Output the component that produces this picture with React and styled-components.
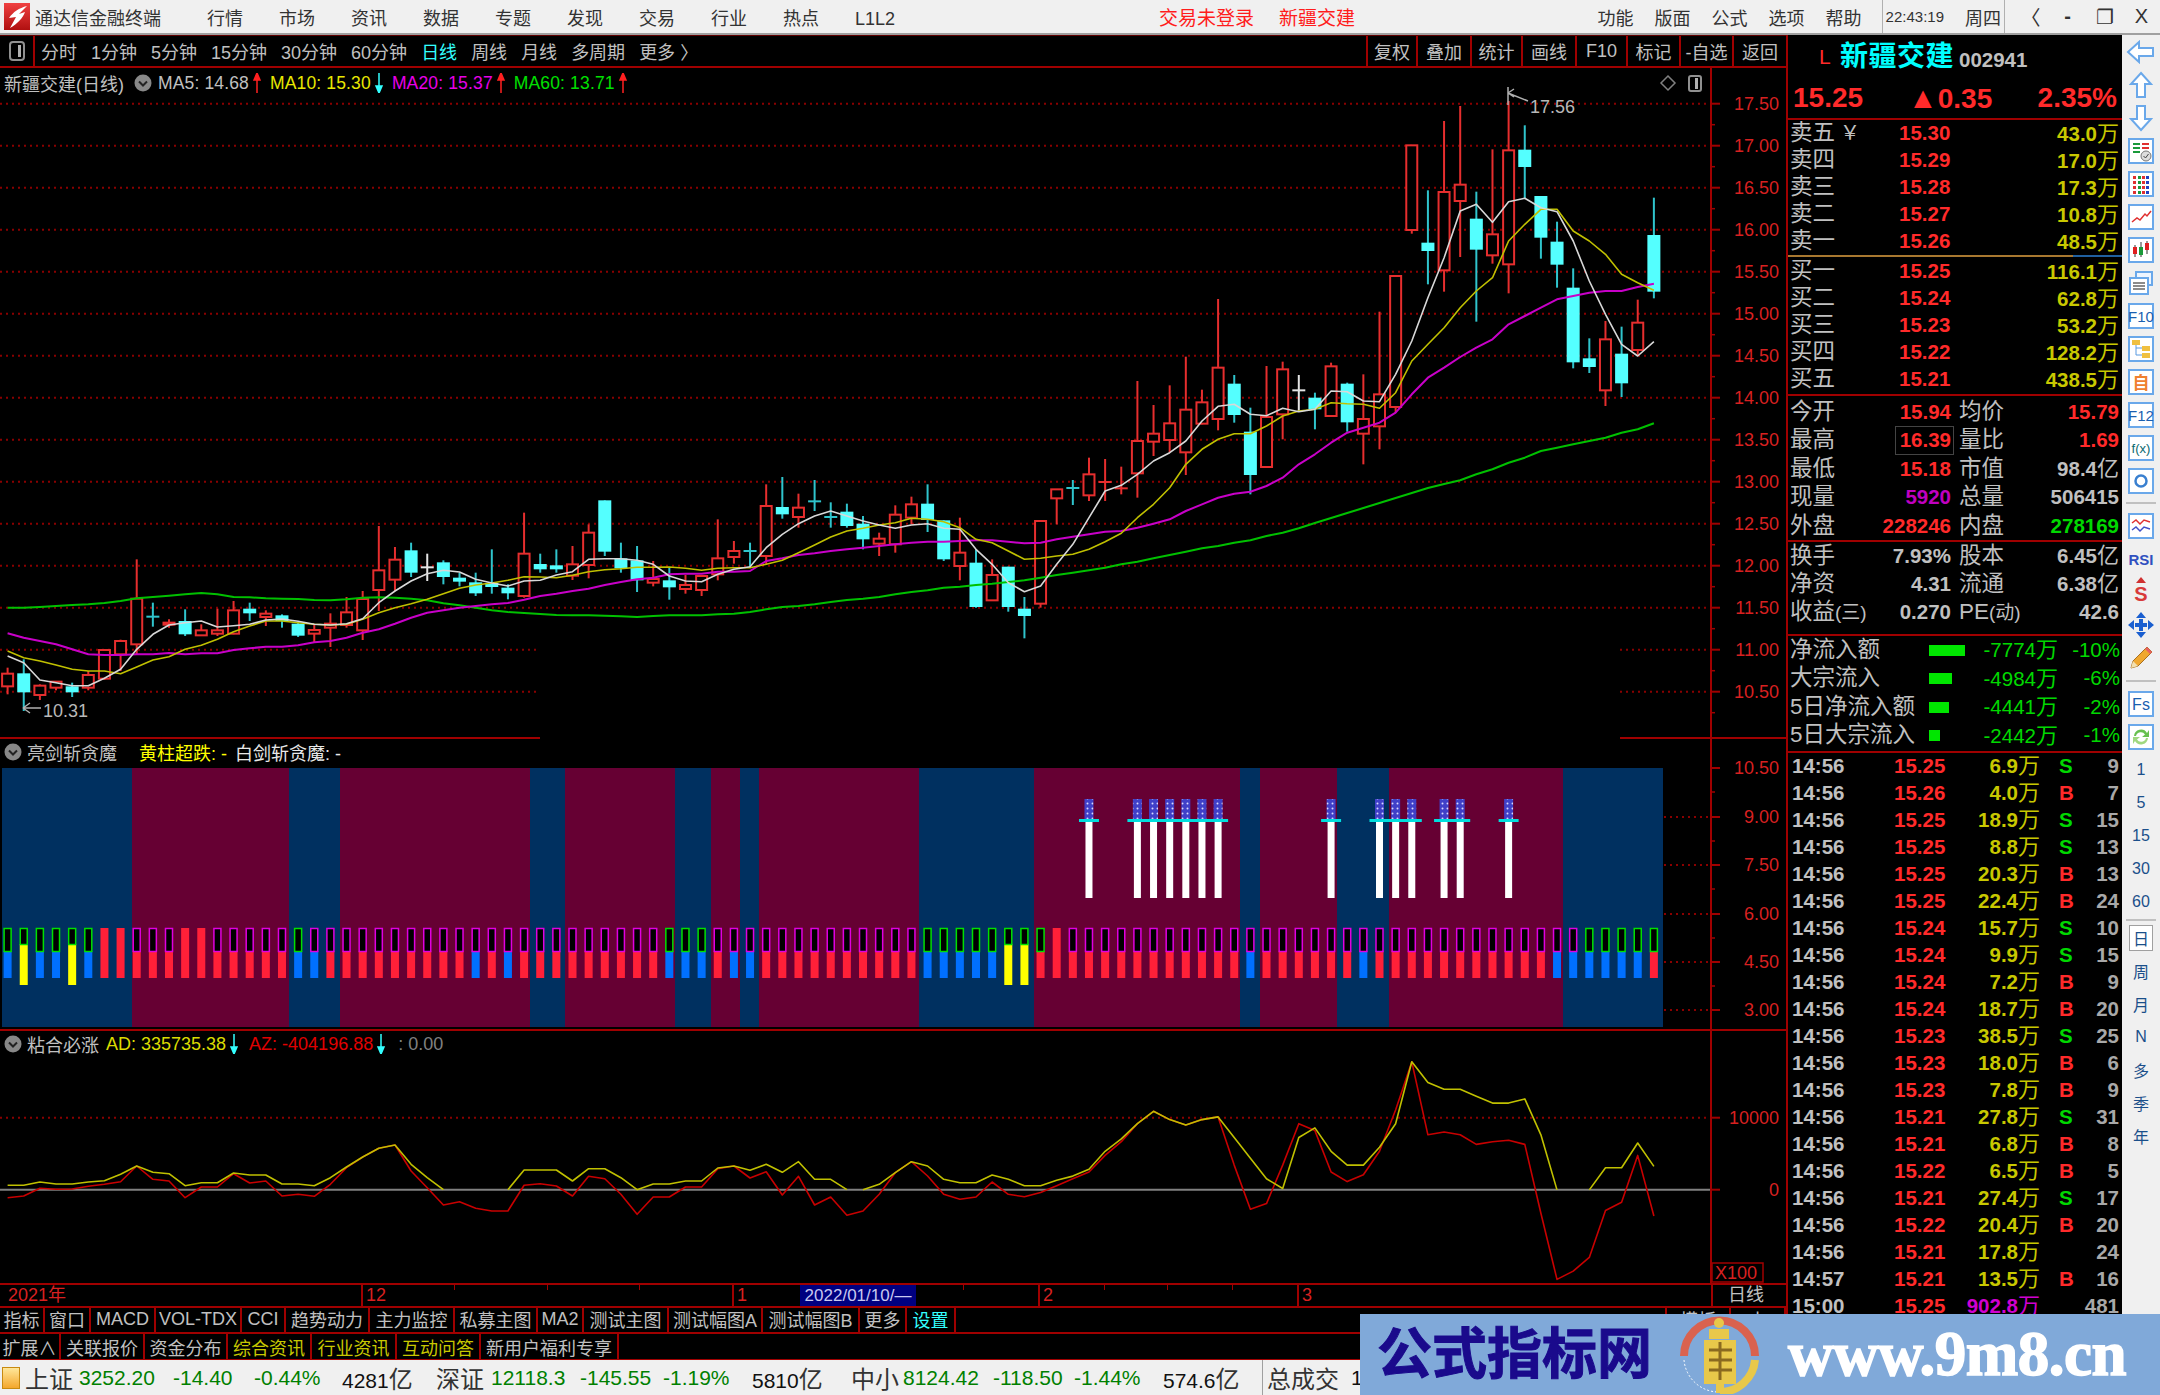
import React from 'react';
import styled, { createGlobalStyle } from 'styled-components';

const FONT = `"Liberation Sans", "Noto Sans CJK SC", sans-serif`;
const RED = '#ff2a2a';
const LINE = '#a00000';
const GOLD = '#c8c800';

const GlobalStyle = createGlobalStyle`
  html, body { margin: 0; padding: 0; background: #000; }
  body { width: 2160px; height: 1395px; overflow: hidden; font-family: ${FONT}; }
`;

/* ---------- chart data ---------- */
// candle y values were read off 3x crops, so y = base + v / 3
const readRows = (base, rows) =>
  rows.map(([k, a, b, c, d]) => [k, base + a / 3, base + b / 3, base + c / 3, base + d / 3]);

const candles = [
  ...readRows(480, [
    ['r', 560, 578, 616, 640], ['c', 535, 577, 634, 690], ['r', 610, 614, 642, 657], ['r', 600, 602, 620, 628],
    ['c', 605, 616, 634, 648], ['r', 570, 582, 620, 628], ['r', 507, 507, 593, 597], ['r', 476, 480, 520, 570],
    ['r', 235, 353, 490, 520], ['c', 365, 407, 407, 437], ['r', 415, 425, 431, 440], ['c', 385, 420, 460, 465],
    ['r', 430, 448, 463, 465], ['r', 383, 448, 458, 465], ['r', 360, 388, 458, 460], ['c', 365, 383, 397, 420],
    ['r', 388, 398, 408, 435], ['c', 400, 403, 420, 440], ['c', 425, 428, 464, 468], ['r', 432, 447, 458, 485],
    ['r', 397, 428, 440, 498], ['r', 348, 394, 432, 440], ['r', 330, 354, 448, 477], ['r', 135, 268, 327, 390],
    ['r', 198, 236, 296, 330], ['c', 185, 208, 275, 288], ['w', 218, 259, 259, 300], ['c', 238, 244, 288, 310],
    ['c', 276, 290, 302, 316], ['c', 275, 304, 337, 345], ['c', 205, 306, 318, 338], ['c', 310, 320, 337, 355],
    ['r', 95, 218, 345, 350], ['c', 218, 249, 265, 275], ['c', 205, 253, 265, 275], ['r', 195, 250, 284, 297],
    ['r', 130, 155, 252, 292], ['c', 58, 58, 212, 225], ['c', 185, 232, 262, 275], ['c', 195, 238, 298, 333],
    ['r', 240, 294, 305, 316], ['c', 258, 298, 319, 356], ['r', 282, 312, 324, 338], ['r', 282, 285, 327, 345],
  ]),
  ...readRows(300, [
    ['r', 655, 772, 820, 838], ['r', 720, 750, 768, 788], ['c', 725, 750, 750, 800], ['r', 550, 615, 765, 790],
    ['c', 528, 618, 640, 653], ['r', 578, 620, 648, 680], ['c', 537, 601, 601, 630], ['c', 604, 648, 648, 680],
    ['c', 608, 632, 675, 680], ['c', 645, 668, 715, 745], ['r', 695, 713, 728, 765], ['r', 613, 641, 730, 755],
    ['r', 587, 610, 650, 670], ['c', 550, 608, 657, 693], ['c', 658, 658, 775, 780], ['r', 650, 755, 795, 838],
    ['c', 745, 785, 918, 920], ['r', 775, 822, 898, 900], ['c', 797, 797, 918, 932], ['c', 888, 923, 945, 1012],
    ['r', 660, 660, 908, 920], ['r', 565, 565, 592, 670], ['c', 537, 561, 561, 612], ['r', 470, 520, 583, 600],
    ['r', 474, 543, 543, 600], ['r', 497, 562, 562, 580], ['r', 240, 420, 517, 590], ['r', 312, 398, 422, 465],
    ['r', 253, 367, 417, 455], ['r', 167, 326, 454, 522], ['r', 266, 304, 368, 370], ['r', -6, 200, 354, 388],
    ['c', 222, 248, 342, 365], ['c', 320, 392, 522, 580], ['r', 195, 348, 498, 500], ['r', 182, 205, 340, 415],
    ['w', 222, 268, 268, 330],
  ]),
  ...readRows(80, [
    ['c', 935, 950, 985, 1045], ['r', 845, 856, 1005, 1005], ['c', 905, 908, 1024, 1052], ['r', 880, 1014, 1058, 1150],
    ['r', 692, 940, 1036, 1105], ['r', 585, 585, 978, 995], ['r', 193, 193, 447, 458], ['c', 328, 485, 510, 610],
    ['r', 120, 333, 568, 632], ['r', 75, 311, 360, 528], ['c', 332, 413, 506, 722], ['r', 205, 460, 523, 548],
    ['r', 60, 208, 550, 637], ['c', 133, 206, 258, 352], ['c', 345, 345, 470, 533], ['c', 422, 482, 551, 620],
    ['c', 562, 620, 844, 862], ['c', 772, 832, 858, 876], ['r', 720, 775, 928, 975], ['c', 737, 818, 907, 948],
    ['r', 656, 725, 807, 825], ['c', 350, 462, 632, 652],
  ]),
];

const merge = (a, b, c) => [...a.map(v => 480 + v / 3), ...b.map(v => 300 + v / 3), ...c.map(v => 80 + v / 3)];

const ma5 = merge(
  [525,545,597,605,614,614,592,565,505,460,432,425,420,438,434,430,417,414,421,430,432,428,413,365,330,300,278,268,273,295,306,315,300,298,282,272,235,233,233,238,250,285,300,302],
  [820,805,797,740,700,668,645,630,645,660,672,682,672,668,682,685,745,790,845,872,855,790,730,650,570,553,520,480,455,420,360,316,310,340,344,322,332],
  [985,930,932,960,962,880,780,650,530,390,370,424,362,352,380,392,480,600,700,790,825,782],
);
const ma10 = merge(
  [510,530,540,552,565,570,570,578,558,537,527,505,493,475,452,435,420,420,425,430,432,430,415,395,380,368,355,338,322,312,306,298,287,288,290,283,272,266,263,259,259,258,262,268],
  [802,800,800,790,778,755,732,708,690,682,672,665,652,655,662,680,715,725,750,775,772,765,760,745,722,697,650,610,560,490,445,415,398,398,375,345,330],
  [985,965,968,970,982,935,840,790,740,680,630,590,480,430,385,385,450,480,520,580,605,628],
);
const ma20 = merge(
  [457,470,480,490,505,520,522,522,520,520,516,520,517,517,507,502,497,497,493,484,480,470,455,445,428,410,395,388,380,375,370,366,356,345,338,330,323,312,303,295,290,280,278,278],
  [812,812,810,780,772,762,757,750,745,740,735,730,725,722,722,720,718,718,722,727,725,715,707,700,692,690,680,668,655,630,610,590,578,572,555,530,490],
  [1120,1085,1055,1040,1025,995,940,890,860,828,800,775,730,705,680,655,645,635,630,630,618,608],
);
const ma60 = merge(
  [380,380,378,375,372,370,366,360,352,348,344,340,336,340,348,349,352,353,354,357,358,355,350,349,350,353,358,367,373,380,388,393,396,399,402,403,403,404,406,408,405,403,403,403],
  [940,938,933,925,918,915,910,903,897,893,888,880,873,868,860,857,852,848,843,838,830,822,815,808,800,790,782,772,762,752,742,735,725,718,705,695,682],
  [1326,1311,1296,1281,1266,1251,1236,1221,1209,1198,1180,1165,1145,1130,1110,1100,1090,1080,1070,1055,1045,1027],
);

const sub2 = (head, tail) => [...head.map(v => 1030 + v / 3), ...tail.map(v => v * 1.3776)];
const adLine = sub2(
  [463,463,453,459,459,453,449,430,405,424,428,464,455,455,426,432,432,459,459,464,440,408,378,352,342,400,440,476,476,476,476,476,417,417,417,450,413,413,440,476,459,459,450,450,411,405,418,400,424,392,445,445,476,476,460,425,392,405,445,455,455,432,445],
  [860,860,856,853,848,835,826,815,806,812,816,812,810,825,840,855,862,825,818,835,845,845,832,815,770,785,790,790,795,800,800,797,823,863,863,863,847,847,829,846],
);
const azLine = sub2(
  [500,495,472,475,474,466,460,452,405,445,450,500,468,468,428,456,450,495,490,496,460,410,378,352,342,420,470,522,512,532,540,540,463,458,465,495,436,443,490,550,498,498,468,468,413,405,441,422,492,436,522,498,553,540,490,425,392,435,490,505,498,453,490],
  [868,865,860,855,850,838,828,815,806,812,816,812,810,845,877,873,845,815,820,850,857,852,835,805,770,823,821,823,830,828,827,830,880,928,922,912,878,872,838,882],
);

const barX = i => 7.6 + 16.14 * i;
const toPoints = (ys, from = 0, to = ys.length - 1) =>
  ys.slice(from, to + 1).map((y, i) => `${barX(i + from).toFixed(1)},${y.toFixed(1)}`).join(' ');

const bgBands = [
  [2, 132, 'b'], [132, 289, 'm'], [289, 340, 'b'], [340, 530, 'm'], [530, 565, 'b'], [565, 675, 'm'],
  [675, 711, 'b'], [711, 740, 'm'], [740, 759, 'b'], [759, 919, 'm'], [919, 1034, 'b'], [1034, 1240, 'm'],
  [1240, 1260, 'b'], [1260, 1337, 'm'], [1337, 1389, 'b'], [1389, 1563, 'm'], [1563, 1663, 'b'],
];
const barOverrides = {
  0: 'gb', 1: 'gy', 2: 'gb', 3: 'gb', 4: 'gy', 5: 'gb', 6: 'f', 7: 'f', 11: 'f', 12: 'f', 18: 'gb', 19: 'mb',
  29: 'mb', 31: 'mb', 41: 'gb', 42: 'gb', 43: 'gb', 45: 'mb', 46: 'mb', 57: 'gb', 58: 'gb', 59: 'gb', 60: 'gb',
  61: 'gb', 62: 'gy', 63: 'gy', 64: 'gr', 65: 'f', 77: 'mb', 84: 'mb', 96: 'mb', 97: 'mb', 98: 'gb', 99: 'gb',
  100: 'gb', 101: 'gb', 102: 'gr',
};
const swordBars = [67, 70, 71, 72, 73, 74, 75, 82, 85, 86, 87, 89, 90, 93];

const mainLabels = ['17.50','17.00','16.50','16.00','15.50','15.00','14.50','14.00','13.50','13.00','12.50','12.00','11.50','11.00','10.50'];
const priceY = i => 102.7 + i * 42;

/* ---------- styled parts ---------- */
const Page = styled.div`
  position: relative;
  width: 2160px;
  height: 1395px;
  display: flex;
  flex-direction: column;
  background: #000;
  overflow: hidden;
`;

const TitleBar = styled.div`
  height: 33px;
  flex: none;
  display: flex;
  align-items: center;
  background: #f0f0f0;
  border-bottom: 2px solid #a0a0a0;
  color: #333;
  font-size: 18px;
  white-space: nowrap;
`;

const AppName = styled.span`
  margin-left: 5px;
  width: 172px;
`;

const MenuGroup = styled.div`
  display: flex;
  align-items: baseline;
  gap: ${p => p.$gap}px;
`;

const AlertText = styled.span`
  color: #ff1c1c;
  font-size: 19px;
  margin-left: ${p => p.$left}px;
`;

const TitleRight = styled.div`
  margin-left: auto;
  display: flex;
  align-items: center;
  height: 100%;
`;

const ClockCell = styled.div`
  display: flex;
  align-items: center;
  height: 100%;
  margin-left: 20px;
  padding: 0 3px;
  border-left: 1px solid #b0b0b0;
  border-right: 1px solid #b0b0b0;
  gap: 21px;
  font-size: 15px;
  span:last-child { font-size: 18px; }
`;

const WindowButton = styled.span`
  width: 37px;
  text-align: center;
  font-size: 20px;
  font-weight: ${p => (p.$bold ? 700 : 400)};
  margin-left: ${p => p.$left || 0}px;
`;

const Body = styled.div`
  flex: none;
  height: 1325px;
  display: flex;
`;

const LeftColumn = styled.div`
  width: 1786px;
  flex: none;
  display: flex;
  flex-direction: column;
`;

const Toolbar = styled.div`
  height: 30px;
  flex: none;
  display: flex;
  align-items: center;
  border-top: 1px solid #600000;
  border-bottom: 2px solid ${LINE};
  color: #c0c0c0;
  font-size: 18px;
  white-space: nowrap;
`;

const ToolSquare = styled.div`
  width: 35px;
  height: 100%;
  flex: none;
  display: flex;
  align-items: center;
  justify-content: center;
  box-sizing: border-box;
  border-right: 2px solid ${LINE};
  margin-right: 6px;
`;

const PeriodList = styled.div`
  display: flex;
  gap: 14px;
`;

const Period = styled.span`
  color: ${p => (p.$active ? '#3ff' : 'inherit')};
`;

const ToolButtons = styled.div`
  margin-left: auto;
  display: flex;
  height: 100%;
`;

const ToolButton = styled.div`
  width: ${p => p.$w}px;
  box-sizing: border-box;
  border-left: 2px solid ${LINE};
  display: flex;
  align-items: center;
  justify-content: center;
`;

const Pane = styled.div`
  position: relative;
  height: ${p => p.$h}px;
  flex: none;
  svg.chart { display: block; }
`;

const Legend = styled.div`
  position: absolute;
  left: 4px;
  top: ${p => p.$top}px;
  height: 24px;
  display: flex;
  align-items: center;
  color: #c0c0c0;
  font-size: 18px;
  white-space: nowrap;
`;

const LegendName = styled.span`
  margin: 0 ${p => p.$right || 0}px 0 ${p => p.$left || 0}px;
`;

const LegendValue = styled.span`
  color: ${p => p.$c};
  font-size: ${p => p.$size || 17.5}px;
  letter-spacing: ${p => p.$spacing || 0}px;
  margin-left: ${p => p.$left || 0}px;
`;

const AxisText = styled.text`
  fill: ${p => p.$c || '#d82020'};
  font-family: ${FONT};
  font-size: 18px;
  text-anchor: ${p => p.$anchor || 'end'};
`;

const TimeAxis = styled.div`
  height: 21px;
  flex: none;
  position: relative;
  display: grid;
  grid-template-columns: 361px 371px 68px 116px 122px 259px 414px 75px;
  border-top: 2px solid ${LINE};
  border-bottom: 2px solid ${LINE};
  margin-bottom: -2px;
  color: #d82020;
  font-size: 18px;
  line-height: 21px;
  white-space: nowrap;
`;

const TimeCell = styled.div`
  box-sizing: border-box;
  padding-left: ${p => (p.$first ? 8 : 3)}px;
  border-left: ${p => (p.$plain ? 'none' : `2px solid ${LINE}`)};
`;

const DateCell = styled.div`
  background: #000080;
  color: #c8c8f0;
  font-size: 17px;
  text-align: center;
`;

const FrameCell = styled.div`
  border-left: 2px solid ${LINE};
  color: #c0c0c0;
  text-align: right;
  padding-right: 22px;
`;

const TimeTick = styled.i`
  position: absolute;
  top: 0;
  width: 1px;
  height: 5px;
  background: ${LINE};
`;

const TabRow = styled.div`
  height: ${p => p.$h}px;
  flex: none;
  display: flex;
  box-sizing: border-box;
  border-bottom: 2px solid ${LINE};
  color: #c0c0c0;
  font-size: 18px;
  white-space: nowrap;
`;

const Tab = styled.div`
  width: ${p => p.$w}px;
  box-sizing: border-box;
  display: flex;
  align-items: center;
  justify-content: center;
  border-right: 2px solid ${LINE};
  border-left: ${p => (p.$edge ? `2px solid ${LINE}` : 'none')};
  color: ${p => p.$c || 'inherit'};
  overflow: hidden;
`;

const TabSpacer = styled.div`
  flex: 1;
`;

/* right quote panel */
const Panel = styled.div`
  width: 336px;
  flex: none;
  box-sizing: border-box;
  border-left: 2px solid ${LINE};
  overflow: hidden;
  color: #c0c0c0;
`;

const NameRow = styled.div`
  height: 44px;
  display: flex;
  align-items: center;
  white-space: nowrap;
`;

const MarketTag = styled.span`
  margin-left: 31px;
  width: 21px;
  color: ${RED};
  font-size: 21px;
`;

const StockName = styled.span`
  color: #0ff;
  font-size: 28px;
  font-weight: 700;
  line-height: 32px;
  letter-spacing: 0.5px;
`;

const StockCode = styled.span`
  margin-left: 5px;
  font-size: 20.5px;
  font-weight: 700;
  padding-top: 6px;
  color: #c0c0c0;
`;

const QuoteRow = styled.div`
  height: 37px;
  display: grid;
  grid-template-columns: 119px 96px 1fr;
  align-items: center;
  padding: 0 5px 2px 5px;
  border-bottom: 2px solid ${LINE};
  color: ${RED};
  font-size: 28px;
  font-weight: 700;
`;

const QuoteTriangle = styled.span`
  font-size: 30px;
  margin-left: -4px;
`;

const QuoteRight = styled.span`
  text-align: right;
`;

const OrderBlock = styled.div`
  padding-top: ${p => p.$top || 0}px;
`;

const OrderRow = styled.div`
  height: 27px;
  display: grid;
  grid-template-columns: 109px 60px 1fr;
  align-items: center;
  padding: 0 3px 0 2px;
  white-space: nowrap;
`;

const ZhLabel = styled.span`
  font-size: 22.5px;
  line-height: 1;
  color: #c0c0c0;
  small { font-size: 19px; }
`;

const Num = styled.span`
  color: ${p => p.$c || RED};
  font-size: 20.5px;
  font-weight: 700;
  line-height: 1;
  text-align: ${p => p.$align || 'left'};
`;

const Unit = styled.span`
  font-size: 22px;
  font-weight: 400;
  line-height: 1;
`;

const CnyMark = styled.span`
  font-size: 20px;
  margin-left: 5px;
`;

const BookDivider = styled.div`
  height: 2px;
  background: linear-gradient(to right, #a87830 0, #a87830 285px, #2060a0 285px);
`;

const StatBlock = styled.div`
  padding-bottom: ${p => p.$bottom || 0}px;
  padding-top: ${p => p.$top || 0}px;
  border-bottom: 2px solid ${LINE};
`;

const StatRow = styled.div`
  height: ${p => p.$h || 28.4}px;
  display: grid;
  grid-template-columns: 50px 111px 60px 108px;
  align-items: center;
  padding-left: 2px;
  white-space: nowrap;
`;

const Value = styled(Num)`
  text-align: right;
  justify-self: end;
`;

const Value2Label = styled(ZhLabel)`
  padding-left: 8px;
`;

const BoxedValue = styled(Value)`
  border: 1px solid #444;
  padding: 3px 2px 3px 4px;
  margin-right: -3px;
`;

const FlowRow = styled.div`
  height: 28.5px;
  display: grid;
  grid-template-columns: 139px 45px 84px 62px;
  align-items: center;
  padding-left: 2px;
  white-space: nowrap;
`;

const FlowBar = styled.i`
  display: block;
  height: 11px;
  width: ${p => p.$w}px;
  background: #00e600;
`;

const FlowValue = styled.span`
  color: #00d800;
  font-size: 20.5px;
  line-height: 1;
  text-align: right;
`;

const TickRow = styled.div`
  height: 27px;
  display: grid;
  grid-template-columns: 102px 52px 94px 30px 49px;
  align-items: center;
  padding-left: 4px;
  white-space: nowrap;
`;

const TickSide = styled.span`
  color: ${p => (p.$v === 'S' ? '#00d800' : RED)};
  font-size: 20.5px;
  font-weight: 700;
  line-height: 1;
  padding-left: 19px;
`;

/* icon rail */
const Rail = styled.div`
  width: 38px;
  flex: none;
  display: flex;
  flex-direction: column;
  align-items: center;
  background: #f0f0f0;
  color: #1a4f8a;
`;

const RailItem = styled.div`
  height: 33px;
  flex: none;
  width: 100%;
  display: flex;
  align-items: center;
  justify-content: center;
  font-size: 16px;
`;

const RailSeparator = styled.div`
  height: ${p => p.$h}px;
  flex: none;
  width: 30px;
  display: flex;
  align-items: center;
  &::after { content: ''; display: block; width: 100%; border-top: 2px solid #c0c0c0; }
`;

const ActivePeriod = styled.span`
  width: 22px;
  height: 24px;
  border: 1px solid #a0a0a0;
  background: #fff;
  display: flex;
  align-items: center;
  justify-content: center;
`;

/* bottom status bar */
const StatusBar = styled.div`
  height: 35px;
  flex: none;
  display: flex;
  align-items: center;
  background: #f0f0f0;
  padding-left: 2px;
  box-sizing: border-box;
  white-space: nowrap;
`;

const StatusIcon = styled.i`
  display: block;
  width: 16px;
  height: 20px;
  margin-right: 5px;
  flex: none;
  border: 1px solid #c88a10;
  background: linear-gradient(#ffe79a, #f4a72c);
`;

const StatusCell = styled.span`
  width: ${p => p.$w}px;
  flex: none;
  color: ${p => p.$c || '#111'};
  font-size: ${p => p.$size || 21}px;
  small { font-size: 24px; color: #333; }
`;

const StatusDivider = styled.span`
  width: 4px;
  height: 100%;
  flex: none;
  border-left: 1px solid #a0a0a0;
`;

const Watermark = styled.div`
  position: absolute;
  right: 0;
  bottom: 0;
  width: 800px;
  height: 81px;
  display: flex;
  align-items: center;
  background: #80a9d9;
  white-space: nowrap;
`;

const MarkTitle = styled.span`
  margin-left: 17px;
  color: #1a0a8c;
  font-size: 55px;
  font-weight: 700;
  line-height: 1;
  -webkit-text-stroke: 1px #1a0a8c;
`;

const MarkLogo = styled.svg`
  margin-left: 28px;
  flex: none;
`;

const MarkUrl = styled.span`
  margin-left: 29px;
  color: #fff;
  font-family: "Liberation Serif", serif;
  font-size: 63px;
  font-weight: 700;
  letter-spacing: -0.5px;
  line-height: 1;
  -webkit-text-stroke: 1.5px #fff;
`;

/* ---------- drawings ---------- */
const Chevron = () => (
  <svg width="18" height="18" viewBox="0 0 18 18" style={{ flex: 'none' }}>
    <circle cx="9" cy="9" r="8.5" fill="#888" />
    <path d="M5 7.5 L9 11.5 L13 7.5" fill="none" stroke="#222" strokeWidth="2" />
  </svg>
);

const TrendArrow = ({ up }) => (
  <svg width="10" height="20" viewBox="0 0 10 20" style={{ flex: 'none', margin: '0 0 0 3px' }}>
    {up
      ? <path d="M5 20 V2 M5 0 L8 7 H2 Z" stroke="#ff2020" fill="#ff2020" strokeWidth="1.5" />
      : <path d="M5 0 V18 M5 20 L8 13 H2 Z" stroke="#3ff" fill="#3ff" strokeWidth="1.5" />}
  </svg>
);

const PinSquare = () => (
  <svg width="16" height="20" viewBox="0 0 16 20">
    <rect x="1" y="1" width="14" height="18" rx="3" fill="none" stroke="#909090" strokeWidth="2" />
    <rect x="9" y="4" width="3" height="12" fill="#b0b0b0" />
  </svg>
);

const Candle = ({ i, data }) => {
  const [kind, hi, top, bot, lo] = data;
  const x = barX(i);
  const doji = top === bot;
  const red = '#e62e2e';
  const color = kind === 'r' ? red : kind === 'w' ? '#e4e4e4' : '#2fc4cc';
  if (doji) {
    return (
      <g stroke={color} strokeWidth="2">
        <line x1={x} x2={x} y1={hi} y2={lo} />
        <line x1={x - 6.5} x2={x + 6.5} y1={top} y2={top} />
      </g>
    );
  }
  if (kind === 'r') {
    return (
      <g>
        <line x1={x} x2={x} y1={hi} y2={top} stroke={color} strokeWidth="2" />
        <line x1={x} x2={x} y1={bot} y2={lo} stroke={color} strokeWidth="2" />
        <rect x={x - 5.5} y={top} width="11" height={bot - top} fill="#000" stroke={red} strokeWidth="2" />
      </g>
    );
  }
  return (
    <g>
      <line x1={x} x2={x} y1={hi} y2={lo} stroke={color} strokeWidth="2" />
      <rect x={x - 6.5} y={top} width="13" height={bot - top} fill="#54ffff" />
    </g>
  );
};

const DottedRow = ({ y, x1 = 0, x2 = 1711 }) => (
  <line x1={x1} x2={x2} y1={y} y2={y} stroke="#8a0000" strokeWidth="2" strokeDasharray="2 4" />
);

const MaLine = ({ ys, color, from, to, width = 1.6 }) => (
  <polyline points={toPoints(ys, from, to)} fill="none" stroke={color} strokeWidth={width} strokeLinejoin="round" />
);

const MainChart = () => (
  <svg className="chart" width="1786" height="671" viewBox="0 67 1786 671">
    {mainLabels.map((t, i) => {
      const y = priceY(i);
      if (y > 630) return (
        <g key={t}>
          <DottedRow y={y} x2={540} />
          <DottedRow y={y} x1={1620} />
        </g>
      );
      return <DottedRow key={t} y={y} />;
    })}
    {candles.map((c, i) => <Candle key={i} i={i} data={c} />)}
    <MaLine ys={ma60} color="#00c000" width={2} />
    <MaLine ys={ma20} color="#c800c8" width={2} />
    <MaLine ys={ma10} color="#c0c000" />
    <MaLine ys={ma5} color="#d8d8d8" />
    <path d="M1508 86 V104 M1508 92 L1528 100 M1508 92 L1514 88 M1508 92 L1514 96" stroke="#b0b0b0" strokeWidth="1.5" fill="none" />
    <AxisText $c="#b8b8b8" $anchor="start" x="1530" y="112">17.56</AxisText>
    <path d="M23 707 H41 M23 707 L30 702 M23 707 L30 712" stroke="#b0b0b0" strokeWidth="1.5" fill="none" />
    <AxisText $c="#b8b8b8" $anchor="start" x="43" y="716">10.31</AxisText>
    <line x1="1711" x2="1711" y1="67" y2="738" stroke={LINE} strokeWidth="2" />
    {mainLabels.map((t, i) => (
      <g key={t}>
        <line x1="1711" x2="1720" y1={priceY(i)} y2={priceY(i)} stroke={LINE} strokeWidth="2" />
        <line x1="1711" x2="1715" y1={priceY(i) + 21} y2={priceY(i) + 21} stroke={LINE} strokeWidth="1.5" />
        <AxisText x="1779" y={priceY(i) + 6}>{t}</AxisText>
      </g>
    ))}
    <path d="M1668 75 L1675 82 L1668 89 L1661 82 Z" fill="none" stroke="#808080" strokeWidth="1.5" />
    <rect x="1689" y="75" width="12" height="15" rx="2" fill="none" stroke="#909090" strokeWidth="2" />
    <rect x="1695" y="77" width="3" height="11" fill="#b0b0b0" />
    <line x1="0" x2="540" y1="737" y2="737" stroke={LINE} strokeWidth="2" />
    <line x1="1620" x2="1786" y1="737" y2="737" stroke={LINE} strokeWidth="2" />
  </svg>
);

const SwordBar = ({ i }) => {
  const x = barX(i);
  return (
    <g>
      <rect x={x - 4.5} y="798" width="9" height="20" fill="url(#swordGrip)" />
      <rect x={x - 10} y="818" width="20" height="3" fill="#00dede" />
      <rect x={x - 3.5} y="821" width="7" height="76" fill="#fff" />
    </g>
  );
};

const VolumeBar = ({ i }) => {
  const x = barX(i) - 4;
  const kind = barOverrides[i] || 'mr';
  if (kind === 'f') return <rect x={x} y="927" width="8" height="50" fill="#ff2038" />;
  const edge = kind[0] === 'g' ? '#00e000' : '#e000e0';
  if (kind[1] === 'y') {
    return (
      <g>
        <rect x={x} y="943" width="8" height="41" fill="#ffff00" />
        <rect x={x + 0.5} y="927.5" width="7" height="16" fill="#000" stroke={edge} strokeWidth="1.5" />
      </g>
    );
  }
  return (
    <g>
      <rect x={x} y="950" width="8" height="27" fill={kind[1] === 'b' ? '#0070ff' : '#ff2038'} />
      <rect x={x + 0.5} y="927.5" width="7" height="23" fill="#000" stroke={edge} strokeWidth="1.5" />
    </g>
  );
};

const SwordChart = () => {
  const rows = [['10.50', 767], ['9.00', 816], ['7.50', 864], ['6.00', 913], ['4.50', 961], ['3.00', 1009]];
  return (
    <svg className="chart" width="1786" height="292" viewBox="0 738 1786 292">
      <defs>
        <pattern id="swordGrip" width="5" height="5" patternUnits="userSpaceOnUse">
          <rect width="5" height="5" fill="#4040c8" />
          <circle cx="2.5" cy="2.5" r="1" fill="#d8d8ff" />
        </pattern>
      </defs>
      {bgBands.map(([a, b, k]) => (
        <rect key={a} x={a} y="767" width={b - a} height="259" fill={k === 'b' ? '#003060' : '#660033'} />
      ))}
      {candles.map((_, i) => <VolumeBar key={i} i={i} />)}
      {swordBars.map(i => <SwordBar key={i} i={i} />)}
      {rows.map(([t, y], n) => (
        <g key={t}>
          {n > 0 && <DottedRow y={y} x1={1664} />}
          <line x1="1711" x2="1720" y1={y} y2={y} stroke={LINE} strokeWidth="2" />
          <line x1="1711" x2="1715" y1={y + 24} y2={y + 24} stroke={LINE} strokeWidth="1.5" />
          <AxisText x="1779" y={y + 6}>{t}</AxisText>
        </g>
      ))}
      <line x1="1711" x2="1711" y1="738" y2="1030" stroke={LINE} strokeWidth="2" />
      <line x1="0" x2="1786" y1="1029" y2="1029" stroke={LINE} strokeWidth="2" />
    </svg>
  );
};

const GlueChart = () => (
  <svg className="chart" width="1786" height="252" viewBox="0 1030 1786 252">
    <DottedRow y={1116.7} />
    <line x1="0" x2="1711" y1="1188.7" y2="1188.7" stroke="#808080" strokeWidth="2" />
    <MaLine ys={azLine} color="#c80000" />
    <MaLine ys={adLine} color="#c0c000" from={0} to={27} />
    <MaLine ys={adLine} color="#c0c000" from={31} to={52} />
    <MaLine ys={adLine} color="#c0c000" from={53} to={96} />
    <MaLine ys={adLine} color="#c0c000" from={98} to={102} />
    <line x1="1711" x2="1711" y1="1030" y2="1282" stroke={LINE} strokeWidth="2" />
    <line x1="1711" x2="1720" y1="1116.7" y2="1116.7" stroke={LINE} strokeWidth="2" />
    <line x1="1711" x2="1720" y1="1188.7" y2="1188.7" stroke={LINE} strokeWidth="2" />
    <AxisText x="1779" y="1123">10000</AxisText>
    <AxisText x="1779" y="1195">0</AxisText>
    <rect x="1712" y="1262" width="51" height="19" fill="none" stroke={LINE} strokeWidth="1.5" />
    <AxisText $anchor="start" x="1715" y="1278">X100</AxisText>
  </svg>
);

/* rail icons */
const Frame = ({ children }) => (
  <svg width="26" height="26" viewBox="0 0 26 26">
    <rect x="1" y="1" width="24" height="24" fill="#fff" stroke="#6aa8ea" strokeWidth="2" />
    {children}
  </svg>
);

const RailGlyph = styled.text`
  font-family: ${FONT};
  font-size: ${p => p.$size || 14}px;
  font-weight: ${p => p.$weight || 400};
  fill: ${p => p.$c || '#1a5fb0'};
  text-anchor: middle;
`;

const ArrowLeft = () => (
  <svg width="30" height="24" viewBox="0 0 30 24"><path d="M2 12 L13 2 V8 H27 V16 H13 V22 Z" fill="#fff" stroke="#6aa8ea" strokeWidth="2" /></svg>
);
const ArrowUp = () => (
  <svg width="24" height="28" viewBox="0 0 24 28"><path d="M12 2 L22 13 H16 V26 H8 V13 H2 Z" fill="#fff" stroke="#6aa8ea" strokeWidth="2" /></svg>
);
const ArrowDown = () => (
  <svg width="24" height="28" viewBox="0 0 24 28"><path d="M12 26 L22 15 H16 V2 H8 V15 H2 Z" fill="#fff" stroke="#6aa8ea" strokeWidth="2" /></svg>
);

const railIcons = [
  <ArrowLeft />, <ArrowUp />, <ArrowDown />,
  <Frame>
    <path d="M5 6h7M5 10h7M5 14h7" stroke="#1a9a3a" strokeWidth="2" />
    <path d="M14 6h7M14 10h7" stroke="#e03030" strokeWidth="2" />
    <circle cx="18" cy="18" r="5" fill="#ddd" stroke="#777" />
    <path d="M15.5 18l2 2 3-4" fill="none" stroke="#444" />
  </Frame>,
  <Frame>
    {[5, 10, 15, 20].map((y, r) => [5, 10, 14, 18].map((x, c) => (
      <rect key={`${r}${c}`} x={x} y={y} width="3" height="3" fill={['#e03030', '#1a9a3a', '#e03030', '#2040c0'][c]} />
    )))}
  </Frame>,
  <Frame><path d="M4 18 L9 14 L12 16 L17 10 L19 12 L23 7" fill="none" stroke="#e03030" strokeWidth="1.5" /></Frame>,
  <Frame>
    <path d="M7 8V20M13 5V20M19 4V17" stroke="#333" />
    <rect x="5" y="10" width="4" height="7" fill="#e02020" />
    <rect x="11" y="10" width="4" height="8" fill="#1a9a3a" />
    <rect x="17" y="6" width="4" height="7" fill="#e02020" />
  </Frame>,
  <svg width="26" height="24" viewBox="0 0 26 24">
    <rect x="8" y="1" width="16" height="13" fill="#eef5ff" stroke="#6aa8ea" strokeWidth="2" />
    <rect x="2" y="7" width="18" height="16" fill="#fff" stroke="#6aa8ea" strokeWidth="2" />
    <path d="M5 12h12M5 15h12M5 18h12" stroke="#666" strokeWidth="1.5" />
  </svg>,
  <Frame><RailGlyph $size={15} x="13" y="18.5">F10</RailGlyph></Frame>,
  <Frame>
    <rect x="4" y="4" width="8" height="5" fill="#f0c040" />
    <rect x="14" y="10" width="8" height="5" fill="#f0c040" />
    <rect x="14" y="17" width="8" height="5" fill="#f0c040" />
    <path d="M8 9V19H14M8 12H14" fill="none" stroke="#5a9be0" />
  </Frame>,
  <Frame><RailGlyph $size={17} $weight={700} $c="#f08030" x="13" y="19.5">自</RailGlyph></Frame>,
  <Frame><RailGlyph $size={15} x="13" y="18.5">F12</RailGlyph></Frame>,
  <Frame><RailGlyph $size={13} $c="#0a6a70" x="13" y="18">f(x)</RailGlyph></Frame>,
  <Frame><circle cx="13" cy="13" r="5.5" fill="none" stroke="#3a80d0" strokeWidth="2.5" /></Frame>,
  'sep12',
  <Frame>
    <path d="M4 10 L8 7 L12 11 L16 7 L22 9" fill="none" stroke="#e03030" strokeWidth="1.5" />
    <path d="M4 17 L8 14 L12 18 L16 14 L22 16" fill="none" stroke="#4050c8" strokeWidth="1.5" />
  </Frame>,
  <svg width="34" height="20" viewBox="0 0 34 20"><RailGlyph $size={15} $weight={700} $c="#3050c0" x="17" y="16">RSI</RailGlyph></svg>,
  <svg width="26" height="32" viewBox="0 0 26 32">
    <path d="M13 1 L18 7 H8 Z" fill="#d03030" />
    <RailGlyph $size={20} $weight={700} $c="#d83a3a" x="13" y="25">S</RailGlyph>
  </svg>,
  <svg width="28" height="28" viewBox="0 0 28 28">
    <path d="M14 1 L19 7 H9 Z M14 27 L19 21 H9 Z M1 14 L7 9 V19 Z M27 14 L21 9 V19 Z" fill="#1a5fd0" />
    <rect x="8" y="12" width="12" height="4" fill="#1a5fd0" />
    <rect x="12" y="8" width="4" height="12" fill="#1a5fd0" />
  </svg>,
  <svg width="26" height="26" viewBox="0 0 26 26">
    <path d="M3 23 L5 16 L19 2 L24 7 L10 21 Z" fill="#f0a830" stroke="#a87020" />
    <path d="M3 23 L5 16 L10 21 Z" fill="#f2e0b0" />
    <path d="M19 2 L24 7 L22 9 L17 4 Z" fill="#e86060" />
  </svg>,
  'sep13',
  <Frame><RailGlyph $size={16} x="13" y="19">Fs</RailGlyph></Frame>,
  <Frame>
    <path d="M6 12 A7 7 0 0 1 19 9 L21 6 V13 H14 L17 10.5 A5 5 0 0 0 8 12 Z" fill="#68c050" />
    <path d="M20 14 A7 7 0 0 1 7 17 L5 20 V13 H12 L9 15.5 A5 5 0 0 0 18 14 Z" fill="#a0d880" />
  </Frame>,
];

const railPeriods = ['1', '5', '15', '30', '60'];
const railFrames = ['周', '月', 'N', '多', '季', '年'];

const asks = [
  ['卖五', '15.30', '43.0', true], ['卖四', '15.29', '17.0'], ['卖三', '15.28', '17.3'], ['卖二', '15.27', '10.8'], ['卖一', '15.26', '48.5'],
];
const bids = [
  ['买一', '15.25', '116.1'], ['买二', '15.24', '62.8'], ['买三', '15.23', '53.2'], ['买四', '15.22', '128.2'], ['买五', '15.21', '438.5'],
];

const ticks = [
  ['14:56','15.25','6.9','S','9'], ['14:56','15.26','4.0','B','7'], ['14:56','15.25','18.9','S','15'], ['14:56','15.25','8.8','S','13'],
  ['14:56','15.25','20.3','B','13'], ['14:56','15.25','22.4','B','24'], ['14:56','15.24','15.7','S','10'], ['14:56','15.24','9.9','S','15'],
  ['14:56','15.24','7.2','B','9'], ['14:56','15.24','18.7','B','20'], ['14:56','15.23','38.5','S','25'], ['14:56','15.23','18.0','B','6'],
  ['14:56','15.23','7.8','B','9'], ['14:56','15.21','27.8','S','31'], ['14:56','15.21','6.8','B','8'], ['14:56','15.22','6.5','B','5'],
  ['14:56','15.21','27.4','S','17'], ['14:56','15.22','20.4','B','20'], ['14:56','15.21','17.8','','24'], ['14:57','15.21','13.5','B','16'],
  ['15:00','15.25','902.8','','481'],
];

const periods = ['分时', '1分钟', '5分钟', '15分钟', '30分钟', '60分钟', '日线', '周线', '月线', '多周期', '更多 〉'];
const toolButtons = [['复权', 50], ['叠加', 54], ['统计', 51], ['画线', 54], ['F10', 51], ['标记', 53], ['-自选', 53], ['返回', 54]];
const tabsA = [
  ['指标', 45], ['窗口', 46], ['MACD', 65], ['VOL-TDX', 86], ['CCI', 44], ['趋势动力', 84], ['主力监控', 85], ['私募主图', 83],
  ['MA2', 46], ['测试主图', 85], ['测试幅图A', 94], ['测试幅图B', 97], ['更多', 47], ['设置', 49, '#3ff'],
];
const tabsB = [
  ['扩展∧', 61], ['关联报价', 84], ['资金分布', 83], ['综合资讯', 84, GOLD], ['行业资讯', 85, GOLD], ['互动问答', 84, GOLD], ['新用户福利专享', 138],
];
const flows = [['净流入额', 36, '-7774', '-10%'], ['大宗流入', 23, '-4984', '-6%'], ['5日净流入额', 20, '-4441', '-2%'], ['5日大宗流入', 11, '-2442', '-1%']];

const Vol = ({ v, c = GOLD }) => (
  <Num $c={c} $align="right">{v}<Unit>万</Unit></Num>
);

const StockLogo = () => (
  <svg width="26" height="27" viewBox="0 0 26 27" style={{ marginLeft: 4, flex: 'none' }}>
    <defs>
      <linearGradient id="logoRed" x1="0" y1="0" x2="0" y2="1">
        <stop offset="0" stopColor="#f04040" />
        <stop offset="1" stopColor="#b01010" />
      </linearGradient>
    </defs>
    <rect width="26" height="27" fill="url(#logoRed)" />
    <path d="M23 3 C15 5 9 9 5 15 L12 14 L6 25 C13 21 19 15 21 9 L15 11 Z" fill="#fff" />
  </svg>
);

const App = () => (
  <>
    <GlobalStyle />
    <Page>
      <TitleBar>
        <StockLogo />
        <AppName>通达信金融终端</AppName>
        <MenuGroup $gap={36}>
          {['行情', '市场', '资讯', '数据', '专题', '发现', '交易', '行业', '热点', 'L1L2'].map(m => <span key={m}>{m}</span>)}
        </MenuGroup>
        <AlertText $left={264}>交易未登录</AlertText>
        <AlertText $left={25}>新疆交建</AlertText>
        <TitleRight>
          <MenuGroup $gap={21}>
            {['功能', '版面', '公式', '选项', '帮助'].map(m => <span key={m}>{m}</span>)}
          </MenuGroup>
          <ClockCell><span>22:43:19</span><span>周四</span></ClockCell>
          <WindowButton $left={7}>〈</WindowButton>
          <WindowButton $bold>-</WindowButton>
          <WindowButton>❐</WindowButton>
          <WindowButton>X</WindowButton>
        </TitleRight>
      </TitleBar>

      <Body>
        <LeftColumn>
          <Toolbar>
            <ToolSquare><PinSquare /></ToolSquare>
            <PeriodList>
              {periods.map(p => <Period key={p} $active={p === '日线'}>{p}</Period>)}
            </PeriodList>
            <ToolButtons>
              {toolButtons.map(([t, w]) => <ToolButton key={t} $w={w}>{t}</ToolButton>)}
            </ToolButtons>
          </Toolbar>

          <Pane $h={671}>
            <MainChart />
            <Legend $top={3}>
              <LegendName $right={10}>新疆交建(日线)</LegendName>
              <Chevron />
              <LegendValue $c="#c0c0c0" $left={6} $spacing={0.15}>MA5: 14.68</LegendValue><TrendArrow up />
              <LegendValue $c="#e8e800" $left={8} $spacing={0.15}>MA10: 15.30</LegendValue><TrendArrow />
              <LegendValue $c="#e800e8" $left={8} $spacing={0.15}>MA20: 15.37</LegendValue><TrendArrow up />
              <LegendValue $c="#00e000" $left={8} $spacing={0.15}>MA60: 13.71</LegendValue><TrendArrow up />
            </Legend>
          </Pane>

          <Pane $h={292}>
            <SwordChart />
            <Legend $top={1}>
              <Chevron />
              <LegendName $left={5}>亮剑斩贪魔</LegendName>
              <LegendValue $c="#ffff00" $left={22} $size={18}>黄柱超跌: -</LegendValue>
              <LegendValue $c="#e8e8e8" $left={8} $size={18}>白剑斩贪魔: -</LegendValue>
            </Legend>
          </Pane>

          <Pane $h={252}>
            <GlueChart />
            <Legend $top={1}>
              <Chevron />
              <LegendName $left={5}>粘合必涨</LegendName>
              <LegendValue $c="#dcdc00" $left={7} $size={18}>AD: 335735.38</LegendValue><TrendArrow />
              <LegendValue $c="#e00000" $left={10} $size={18}>AZ: -404196.88</LegendValue><TrendArrow />
              <LegendValue $c="#808080" $left={12} $size={18}>: 0.00</LegendValue>
            </Legend>
          </Pane>

          <TimeAxis>
            <TimeCell $first $plain>2021年</TimeCell>
            <TimeCell>12</TimeCell>
            <TimeCell>1</TimeCell>
            <DateCell>2022/01/10/—</DateCell>
            <TimeCell $plain />
            <TimeCell>2</TimeCell>
            <TimeCell>3</TimeCell>
            <FrameCell>日线</FrameCell>
            {[454, 547, 639, 963, 1104, 1167, 1232].map(x => <TimeTick key={x} style={{ left: x }} />)}
          </TimeAxis>

          <TabRow $h={28}>
            {tabsA.map(([t, w, c]) => <Tab key={t} $w={w} $c={c}>{t}</Tab>)}
            <TabSpacer />
            <Tab $w={66} $edge>模板</Tab>
            <Tab $w={55}>小</Tab>
          </TabRow>
          <TabRow $h={27}>
            {tabsB.map(([t, w, c]) => <Tab key={t} $w={w} $c={c}>{t}</Tab>)}
          </TabRow>
        </LeftColumn>

        <Panel>
          <NameRow>
            <MarketTag>L</MarketTag>
            <StockName>新疆交建</StockName>
            <StockCode>002941</StockCode>
          </NameRow>
          <QuoteRow>
            <span>15.25</span>
            <span><QuoteTriangle>▲</QuoteTriangle>0.35</span>
            <QuoteRight>2.35%</QuoteRight>
          </QuoteRow>

          <OrderBlock>
            {asks.map(([l, p, v, cny]) => (
              <OrderRow key={l}>
                <ZhLabel>{l}{cny && <CnyMark>￥</CnyMark>}</ZhLabel>
                <Num>{p}</Num>
                <Vol v={v} />
              </OrderRow>
            ))}
          </OrderBlock>
          <BookDivider />
          <OrderBlock $top={1}>
            {bids.map(([l, p, v]) => (
              <OrderRow key={l}>
                <ZhLabel>{l}</ZhLabel>
                <Num>{p}</Num>
                <Vol v={v} />
              </OrderRow>
            ))}
          </OrderBlock>

          <StatBlock $top={1} />
          <StatBlock $top={2}>
            <StatRow><ZhLabel>今开</ZhLabel><Value>15.94</Value><Value2Label>均价</Value2Label><Value>15.79</Value></StatRow>
            <StatRow><ZhLabel>最高</ZhLabel><BoxedValue>16.39</BoxedValue><Value2Label>量比</Value2Label><Value>1.69</Value></StatRow>
            <StatRow><ZhLabel>最低</ZhLabel><Value>15.18</Value><Value2Label>市值</Value2Label><Value $c="#c0c0c0">98.4<Unit>亿</Unit></Value></StatRow>
            <StatRow><ZhLabel>现量</ZhLabel><Value $c="#c000c0">5920</Value><Value2Label>总量</Value2Label><Value $c="#c0c0c0">506415</Value></StatRow>
            <StatRow><ZhLabel>外盘</ZhLabel><Value>228246</Value><Value2Label>内盘</Value2Label><Value $c="#00d800">278169</Value></StatRow>
          </StatBlock>
          <StatBlock $bottom={8}>
            <StatRow $h={28}><ZhLabel>换手</ZhLabel><Value $c="#c0c0c0">7.93%</Value><Value2Label>股本</Value2Label><Value $c="#c0c0c0">6.45<Unit>亿</Unit></Value></StatRow>
            <StatRow $h={28}><ZhLabel>净资</ZhLabel><Value $c="#c0c0c0">4.31</Value><Value2Label>流通</Value2Label><Value $c="#c0c0c0">6.38<Unit>亿</Unit></Value></StatRow>
            <StatRow $h={28}><ZhLabel>收益<small>(三)</small></ZhLabel><Value $c="#c0c0c0">0.270</Value><Value2Label>PE<small>(动)</small></Value2Label><Value $c="#c0c0c0">42.6</Value></StatRow>
          </StatBlock>
          <StatBlock $bottom={1}>
            {flows.map(([l, w, v, pct]) => (
              <FlowRow key={l}>
                <ZhLabel>{l}</ZhLabel>
                <FlowBar $w={w} />
                <FlowValue>{v}<Unit>万</Unit></FlowValue>
                <FlowValue>{pct}</FlowValue>
              </FlowRow>
            ))}
          </StatBlock>

          {ticks.map(([t, p, v, side, n], i) => (
            <TickRow key={i}>
              <Num $c="#c0c0c0">{t}</Num>
              <Num>{p}</Num>
              <Vol v={v} c={Number(v) > 500 ? '#d000d0' : GOLD} />
              <TickSide $v={side}>{side}</TickSide>
              <Num $c="#a8a8a8" $align="right">{n}</Num>
            </TickRow>
          ))}
        </Panel>

        <Rail>
          {railIcons.map((icon, i) => {
            if (icon === 'sep12') return <RailSeparator key={i} $h={12} />;
            if (icon === 'sep13') return <RailSeparator key={i} $h={13} />;
            return <RailItem key={i}>{icon}</RailItem>;
          })}
          {railPeriods.map(p => <RailItem key={p}>{p}</RailItem>)}
          <RailSeparator $h={3} />
          <RailItem><ActivePeriod>日</ActivePeriod></RailItem>
          {railFrames.map(p => <RailItem key={p}>{p}</RailItem>)}
        </Rail>
      </Body>

      <StatusBar>
        <StatusIcon />
        <StatusCell $w={54} $size={24} $c="#333">上证</StatusCell>
        <StatusCell $w={94} $c="#008000">3252.20</StatusCell>
        <StatusCell $w={81} $c="#008000">-14.40</StatusCell>
        <StatusCell $w={88} $c="#008000">-0.44%</StatusCell>
        <StatusCell $w={94}>4281<small>亿</small></StatusCell>
        <StatusCell $w={55} $size={24} $c="#333">深证</StatusCell>
        <StatusCell $w={89} $c="#008000">12118.3</StatusCell>
        <StatusCell $w={83} $c="#008000">-145.55</StatusCell>
        <StatusCell $w={89} $c="#008000">-1.19%</StatusCell>
        <StatusCell $w={99}>5810<small>亿</small></StatusCell>
        <StatusCell $w={52} $size={24} $c="#333">中小</StatusCell>
        <StatusCell $w={90} $c="#008000">8124.42</StatusCell>
        <StatusCell $w={81} $c="#008000">-118.50</StatusCell>
        <StatusCell $w={89} $c="#008000">-1.44%</StatusCell>
        <StatusCell $w={99}>574.6<small>亿</small></StatusCell>
        <StatusDivider />
        <StatusCell $w={84} $size={24} $c="#333">总成交</StatusCell>
        <StatusCell $w={10}>1</StatusCell>
      </StatusBar>

      <Watermark>
        <MarkTitle>公式指标网</MarkTitle>
        <MarkLogo width="79" height="78" viewBox="0 0 79 78">
          <path d="M4 40 A35 35 0 0 1 75 40" fill="none" stroke="#d9624f" strokeWidth="8" />
          <path d="M75 44 A35 35 0 0 1 40 76" fill="none" stroke="#e8c84a" strokeWidth="8" />
          <path d="M4 44 A35 35 0 0 0 40 76" fill="none" stroke="#fff" strokeWidth="1" strokeDasharray="2 2" />
          <circle cx="39" cy="7" r="5" fill="#e8c84a" />
          <rect x="29" y="13" width="20" height="10" fill="#e8c84a" />
          <rect x="24" y="24" width="32" height="44" fill="#e8c84a" />
          <rect x="36" y="68" width="8" height="9" fill="#e8c84a" />
          <path d="M29 34 H52 M29 44 H52 M29 54 H52 M40 26 V64" stroke="#8a6a20" strokeWidth="3" />
        </MarkLogo>
        <MarkUrl>www.9m8.cn</MarkUrl>
      </Watermark>
    </Page>
  </>
);

export default App;
